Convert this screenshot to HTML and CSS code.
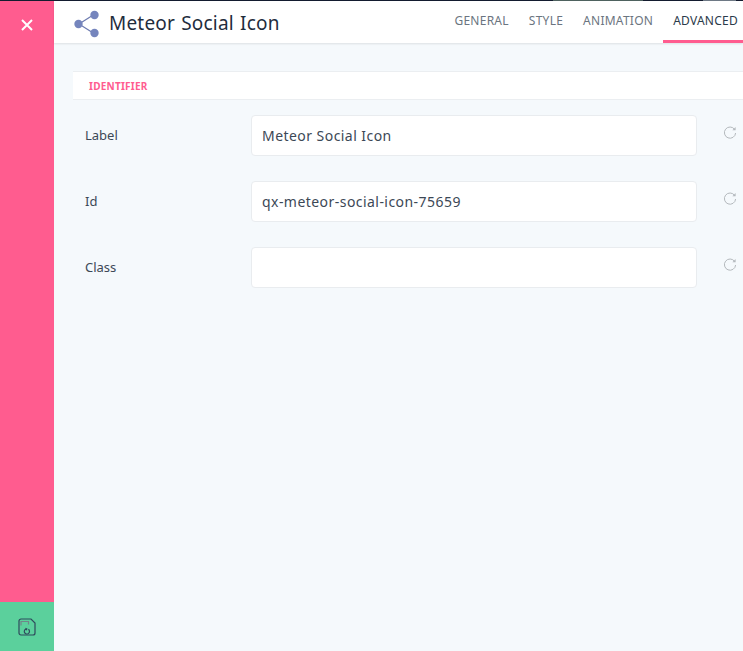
FILE: index.html
```html
<!DOCTYPE html>
<html lang="en">
<head>
    <meta charset="UTF-8">
    <meta name="viewport" content="width=device-width, initial-scale=1.0">
    <title>Meteor Social Icon</title>
    <link rel="stylesheet" href="styles.css">
</head>
<body>
    <div class="top-strip"></div>
    <div class="editor">
        <aside class="sidebar">
            <button class="close-btn" aria-label="Close">
                <svg width="12" height="12" viewBox="0 0 12 12"><path d="M1 1l10 10M11 1L1 11" stroke="#fff" stroke-width="2"/></svg>
            </button>
            <button class="save-btn" aria-label="Save">
                <svg width="18" height="18" viewBox="0 0 18 18" fill="none">
                    <path d="M3 1h10l4 4v10a2 2 0 0 1-2 2H3a2 2 0 0 1-2-2V3a2 2 0 0 1 2-2z" stroke="#2f4a5c" stroke-width="1.2"/>
                    <path d="M3 7.5V3.5h7.5v3" stroke="#71868a" stroke-width="1.2"/>
                    <path d="M8.2 10.9A2.6 2.6 0 1 0 10.4 11.3M7.4 10.2l1.4 0.7-0.7 1.3" stroke="#2f4a5c" stroke-width="1.2"/>
                </svg>
            </button>
        </aside>
        <main class="content">
            <header class="topbar">
                <div class="title">
                    <svg width="28" height="28" viewBox="0 0 28 28">
                        <path d="M21 4.5L6 14l15 9.5" fill="none" stroke="#6d7bb0" stroke-width="1.2"/>
                        <circle cx="21.5" cy="5" r="4.2" fill="#7585bd"/>
                        <circle cx="5.5" cy="14" r="4.2" fill="#7585bd"/>
                        <circle cx="21.5" cy="23" r="4.2" fill="#7585bd"/>
                    </svg>
                    <h1>Meteor Social Icon</h1>
                </div>
                <nav class="tabs">
                    <a class="tab">GENERAL</a>
                    <a class="tab">STYLE</a>
                    <a class="tab">ANIMATION</a>
                    <a class="tab active">ADVANCED</a>
                </nav>
            </header>
            <section class="panel">
                <div class="section-head">IDENTIFIER</div>
                <div class="field">
                    <label>Label</label>
                    <input class="input" type="text" value="Meteor Social Icon">
                    <svg class="reset" width="14" height="14" viewBox="0 0 14 14" fill="none"><path d="M11.6 3.4A5.6 5.6 0 1 0 12.6 7" stroke="#b4b9bd"/><path d="M12.6 1v3.2H9.4" fill="#b4b9bd"/></svg>
                </div>
                <div class="field">
                    <label>Id</label>
                    <input class="input" type="text" value="qx-meteor-social-icon-75659">
                    <svg class="reset" width="14" height="14" viewBox="0 0 14 14" fill="none"><path d="M11.6 3.4A5.6 5.6 0 1 0 12.6 7" stroke="#b4b9bd"/><path d="M12.6 1v3.2H9.4" fill="#b4b9bd"/></svg>
                </div>
                <div class="field">
                    <label>Class</label>
                    <input class="input" type="text" value="">
                    <svg class="reset" width="14" height="14" viewBox="0 0 14 14" fill="none"><path d="M11.6 3.4A5.6 5.6 0 1 0 12.6 7" stroke="#b4b9bd"/><path d="M12.6 1v3.2H9.4" fill="#b4b9bd"/></svg>
                </div>
            </section>
        </main>
    </div>
</body>
</html>
```

FILE: styles.css
```css
html, body {
    height: 100%;
}

body {
    margin: 0;
    overflow: hidden;
    display: flex;
    flex-direction: column;
    background: #F5F9FC;
    font-family: "Noto Sans", sans-serif;
    color: #2b3a4a;
}

/* bit of the page behind the panel that still shows at the very top */
.top-strip {
    height: 1px;
    background: linear-gradient(to right,
        #141c30 553px, #4f6360 553px, #4f6360 643px,
        #141c30 643px, #141c30 703px, #6f7a86 703px, #6f7a86 736px, #141c30 736px);
}

.editor {
    flex: 1;
    display: flex;
    min-height: 0;
}

.sidebar {
    width: 54px;
    display: flex;
    flex-direction: column;
    justify-content: space-between;
    background: #FF5C8F;
}

.close-btn, .save-btn {
    display: flex;
    align-items: center;
    justify-content: center;
    border: none;
    padding: 0;
}

.close-btn {
    height: 48px;
    background: none;
}

.save-btn {
    height: 49px;
    background: #5BD09C;
}

.content {
    flex: 1;
    min-width: 0;
}

.topbar {
    height: 42px;
    display: flex;
    align-items: center;
    justify-content: space-between;
    background: white;
    box-shadow: 0 1px 2px rgba(0,0,0,0.1);
}

.title {
    display: flex;
    align-items: center;
    gap: 8px;
    padding: 3px 0 0 19px;
}

.title h1 {
    margin: -2px 0 0;
    font-size: 19px;
    font-weight: 400;
    color: #1f2d3d;
    letter-spacing: 0.2px;
    word-spacing: 1px;
}

.tabs {
    display: flex;
    align-self: stretch;
    font-size: 12px;
    letter-spacing: 0.25px;
}

.tab {
    display: flex;
    align-items: center;
    padding: 0 0 3px;
    margin-left: 20px;
    color: #6b7580;
}

.tab.active {
    color: #2b3a4a;
    border-bottom: 3px solid #FF5C8F;
    margin-left: 10px;
    padding: 0 5px 0 10px;
}

.panel {
    padding: 28px 0 0 19px;
}

.section-head {
    height: 27px;
    display: flex;
    align-items: center;
    padding-left: 16px;
    background: white;
    border-top: 1px solid #ebeef1;
    border-bottom: 1px solid #ebeef1;
    font-size: 10px;
    font-weight: 700;
    letter-spacing: 0.25px;
    color: #FF5C8F;
}

.field {
    display: flex;
    align-items: center;
    height: 41px;
    margin-top: 25px;
}

.section-head + .field {
    margin-top: 15px;
}

.field label {
    width: 178px;
    box-sizing: border-box;
    padding: 0 0 1px 12px;
    font-size: 13px;
    color: #3c4856;
}

.input {
    width: 446px;
    height: 41px;
    box-sizing: border-box;
    padding: 0 10px;
    background: white;
    border: 1px solid #e9ecef;
    border-radius: 4px;
    font-family: inherit;
    font-size: 14px;
    letter-spacing: 0.45px;
    color: #3c4856;
}

.reset {
    margin: -6px 0 0 26px;
}
```
